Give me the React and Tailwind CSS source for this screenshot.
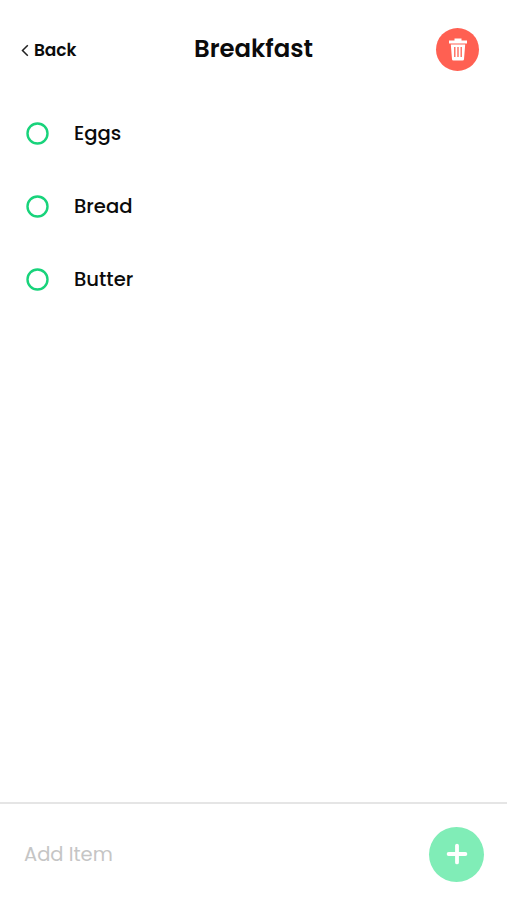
import React from 'react';

const items = ['Eggs', 'Bread', 'Butter'];

function TrashIcon() {
  return (
    <svg width="20" height="24" viewBox="0 0 20 24" fill="none">
      <path d="M6.5 0.5h7v2H19v3H1v-3h5.5z" fill="#fff" />
      <path d="M2.8 6.4h14.4l-1.2 14.8a1.4 1.4 0 0 1-1.4 1.3H5.4A1.4 1.4 0 0 1 4 21.2z" fill="#fff" />
      <path d="M6.8 9v10M10 9v10M13.2 9v10" stroke="#ff6052" strokeWidth="1.3" />
    </svg>
  );
}

function Header() {
  return (
    <header className="grid grid-cols-[150px_1fr_150px] items-center h-[99px] pl-[21px] pr-[28px]">
      <button className="flex items-center pt-[2px] text-[17px] font-semibold tracking-[-0.1px]">
        <svg width="9" height="13" viewBox="0 0 9 13" fill="none" className="mr-1">
          <path d="M6.8 1.2 1.5 6.5l5.3 5.3" stroke="#222" strokeWidth="1.5" />
        </svg>
        Back
      </button>
      <h1 className="text-center text-[24.4px] font-semibold pl-[7px]">Breakfast</h1>
      <button className="justify-self-end flex items-center justify-center size-[43px] rounded-full bg-[#ff6052]">
        <TrashIcon />
      </button>
    </header>
  );
}

function App() {
  return (
    <div className="h-screen flex flex-col bg-white text-[#0b0b0b] font-['Poppins','Inter',sans-serif]">
      <Header />
      <ul className="flex-1 -mt-[2.5px]">
        {items.map((item) => (
          <li key={item} className="flex items-center h-[73.2px] pl-[26px] text-[19.6px] font-medium">
            <svg width="23" height="23" viewBox="0 0 23 23" fill="none" className="mr-[25px]">
              <circle cx="11.5" cy="11.5" r="10" stroke="#18d37b" strokeWidth="2.4" />
            </svg>
            <span className="pt-px">{item}</span>
          </li>
        ))}
      </ul>
      <footer className="flex items-center justify-between h-[98px] border-t-2 border-[#e5e5e5] pl-[24px] pr-[23px] pt-[4px]">
        <input
          type="text"
          placeholder="Add Item"
          className="w-[300px] pt-px text-[19.5px] outline-none placeholder:text-[#c5c5c5]"
        />
        <button className="flex items-center justify-center size-[55px] rounded-full bg-[#80edb7]">
          <svg width="22" height="22" viewBox="0 0 22 22" fill="none">
            <path d="M11 2.6v16.8M2.6 11h16.8" stroke="#fff" strokeWidth="3.8" strokeLinecap="round" />
          </svg>
        </button>
      </footer>
    </div>
  );
}

export default App;
